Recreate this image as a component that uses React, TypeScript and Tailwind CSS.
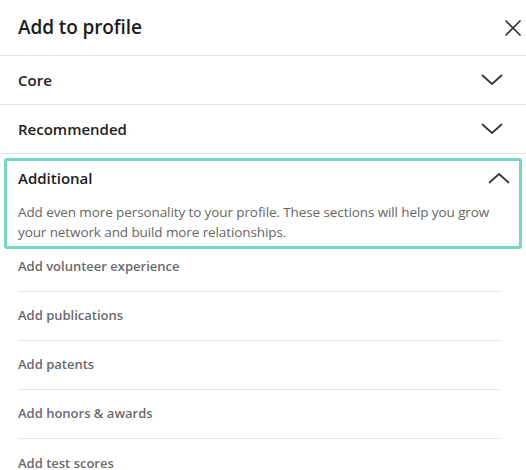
import React from "react";

const ChevronDown = () => (
  <svg width="22" height="12" viewBox="0 0 22 12" fill="none">
    <path d="M1.5 1.5 L11 10 L20.5 1.5" stroke="#333" strokeWidth="1.7" strokeLinecap="round" strokeLinejoin="round" />
  </svg>
);

const ChevronUp = () => (
  <svg width="22" height="12" viewBox="0 0 22 12" fill="none">
    <path d="M1.5 10.5 L11 2 L20.5 10.5" stroke="#333" strokeWidth="1.7" strokeLinecap="round" strokeLinejoin="round" />
  </svg>
);

const CloseIcon = () => (
  <svg width="18" height="18" viewBox="0 0 18 18" fill="none">
    <path d="M2 2 L16 16 M16 2 L2 16" stroke="#333" strokeWidth="1.7" strokeLinecap="round" />
  </svg>
);

const items = [
  "Add volunteer experience",
  "Add publications",
  "Add patents",
  "Add honors & awards",
  "Add test scores",
];

export default function App() {
  return (
    <div
      className="w-[526px] h-[470px] overflow-hidden bg-white"
      style={{ fontFamily: '"Open Sans", "Noto Sans", sans-serif' }}
    >
      <div className="h-[56px] flex items-center justify-between pl-[18px] pr-[4px] border-b border-[#e4e4e4]">
        <span className="text-[19px] font-semibold text-[#1c1c1c] tracking-[-0.1px]">Add to profile</span>
        <CloseIcon />
      </div>
      <div className="h-[49px] flex items-center justify-between pl-[18px] pr-[23px] border-b border-[#e4e4e4]">
        <span className="text-[15px] font-semibold text-[#222]">Core</span>
        <ChevronDown />
      </div>
      <div className="h-[49px] flex items-center justify-between pl-[18px] pr-[23px] border-b border-[#e4e4e4]">
        <span className="text-[15px] font-semibold text-[#222]">Recommended</span>
        <ChevronDown />
      </div>
      <div className="mx-[4px] mt-[4px] h-[91px] border-[3px] border-[#74d7c6] rounded-[3px] pl-[11px] pr-[9px] pt-[5px]">
        <div className="h-[24px] flex items-center justify-between">
          <span className="text-[15px] font-semibold text-[#1c1c1c]">Additional</span>
          <ChevronUp />
        </div>
        <p className="mt-[12px] pr-[16px] text-[13.5px] leading-[20px] text-[#666] tracking-[-0.1px]">
          Add even more personality to your profile. These sections will help you grow your network and build more relationships.
        </p>
      </div>
      <div className="-mt-[6px] pl-[18px] pr-[26px]">
        {items.map((t, i) => (
          <div
            key={t}
            className={`h-[49px] flex items-center ${i < items.length - 1 ? "border-b border-[#e4e4e4]" : ""}`}
          >
            <span className="text-[13px] font-semibold text-[#6a6a6a]">{t}</span>
          </div>
        ))}
      </div>
    </div>
  );
}
